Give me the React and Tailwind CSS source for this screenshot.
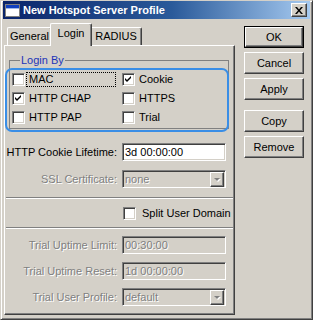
import React from 'react';

const raised =
  'border border-t-white border-l-white border-b-[#404040] border-r-[#404040] shadow-[inset_-1px_-1px_0_#808080,inset_1px_1px_0_#d4d0c8]';
const sunken =
  'border border-t-[#808080] border-l-[#808080] border-b-white border-r-white shadow-[inset_1px_1px_0_#404040,inset_-1px_-1px_0_#d4d0c8]';
const dimText = 'text-[#808080] [text-shadow:1px_1px_0_#ffffff]';

const Check = ({ checked }) => (
  <span className={`${sunken} w-[13px] h-[13px] shrink-0 bg-white flex items-center justify-center`}>
    {checked && (
      <svg width="7" height="7" viewBox="0 0 7 7">
        <path d="M0 2 L2 4 L6 0 L6 2 L2 6 L0 4 Z" fill="#000" />
      </svg>
    )}
  </span>
);

const Box = ({ label, checked, focus }) => (
  <div className="flex items-center h-[13px]">
    <Check checked={checked} />
    <span
      className={`ml-[2px] pl-[2px] h-[13px] leading-[12px] whitespace-nowrap ${focus ? 'w-[88px] outline outline-1 outline-dotted outline-[#000]' : ''}`}
    >
      {label}
    </span>
  </div>
);

const Arrow = ({ dim }) => (
  <span className={`${raised} w-[14px] h-[15px] bg-[#d4d0c8] flex items-center justify-center`}>
    <svg width="8" height="5" viewBox="0 0 8 5">
      {dim && <path d="M2 2 L8 2 L5 5 Z" fill="#fff" />}
      <path d="M1 1 L7 1 L4 4 Z" fill={dim ? '#808080' : '#000'} />
    </svg>
  </span>
);

const Field = ({ label, value, disabled, select, className = '' }) => (
  <div className={`flex items-center ${className}`}>
    <div className={`w-[112px] text-right whitespace-nowrap ${disabled ? dimText : ''}`}>{label}</div>
    <div
      className={`${sunken} ml-[5px] w-[104px] h-[18px] flex items-center justify-between pl-[2px] pr-[1px] ${
        disabled ? 'bg-[#d4d0c8]' : 'bg-white'
      }`}
    >
      <span className={disabled ? dimText : ''}>{value}</span>
      {select && <Arrow dim={disabled} />}
    </div>
  </div>
);

const Separator = ({ className = '' }) => (
  <div className={`h-[2px] border-t border-t-[#808080] border-b border-b-white ${className}`} />
);

const Button = ({ children, def, className = '' }) => (
  <div className={`${def ? 'border border-black' : ''} ${className}`}>
    <div
      className={`${raised} ${def ? 'h-[20px]' : 'h-[22px]'} flex items-center justify-center bg-[#d4d0c8]`}
    >
      {children}
    </div>
  </div>
);

const Tab = ({ children, active, className = '' }) => (
  <div
    className={`border border-b-0 border-t-white border-l-white border-r-[#404040] rounded-t-[2px] shadow-[inset_-1px_0_0_#808080] flex items-center justify-center bg-[#d4d0c8] ${
      active ? 'h-[23px] -mb-[1px] relative z-10 -mx-[2px] pb-[3px]' : 'h-[18px]'
    } ${className}`}
  >
    {children}
  </div>
);

export default function App() {
  return (
    <div className="w-[313px] h-[320px] bg-[#d4d0c8] text-[11px] text-black font-['Liberation_Sans',Arial,sans-serif] border border-t-[#d4d0c8] border-l-[#d4d0c8] border-r-[#404040] border-b-[#404040] shadow-[inset_1px_1px_0_#ffffff,inset_-1px_-1px_0_#808080] px-[2px] overflow-hidden">
      {/* title bar */}
      <div className="h-[18px] bg-[linear-gradient(to_right,#0a246a,#2a5a9a_55%,#a6caf0)] flex items-center pl-[2px] pr-[3px]">
        <svg width="15" height="13" viewBox="0 0 15 13" className="shrink-0">
          <rect x="0.5" y="0.5" width="14" height="12" fill="#fff" stroke="#808080" />
          <rect x="1" y="1" width="13" height="3" fill="#1040c0" />
          <rect x="1" y="4" width="13" height="1" fill="#a0b8e8" />
        </svg>
        <span className="ml-[3px] font-bold text-white text-[11px] leading-none">New Hotspot Server Profile</span>
        <div className={`${raised} ml-auto w-[16px] h-[14px] bg-[#d4d0c8] flex items-center justify-center`}>
          <svg width="8" height="7" viewBox="0 0 8 7">
            <path d="M0 0 L2 0 L4 2.5 L6 0 L8 0 L5 3.5 L8 7 L6 7 L4 4.5 L2 7 L0 7 L3 3.5 Z" fill="#000" />
          </svg>
        </div>
      </div>

      <div className="flex">
        {/* left: tabs + panel */}
        <div className="w-[231px] ml-[1px]">
          <div className="flex items-end h-[26px] pl-[3px]">
            <Tab className="w-[45px]">General</Tab>
            <Tab active className="w-[42px]">Login</Tab>
            <Tab className="w-[52px]">RADIUS</Tab>
          </div>
          <div className="relative h-[270px] border border-t-white border-l-white border-r-[#404040] border-b-[#404040] shadow-[inset_-1px_-1px_0_#808080]">
            <fieldset className="mt-[8px] ml-[4px] w-[220px] border border-[#808080] pt-[6px] pb-[4px] pl-[2px]">
              <legend className="ml-[8px] px-[1px] text-[#1c34b8] leading-[13px]">Login By</legend>
              <div className="grid grid-cols-[110px_1fr] gap-y-[6px]">
                <Box label="MAC" focus />
                <Box label="Cookie" checked />
                <Box label="HTTP CHAP" checked />
                <Box label="HTTPS" />
                <Box label="HTTP PAP" />
                <Box label="Trial" />
              </div>
            </fieldset>
            <div className="absolute left-[0px] top-[22px] w-[224px] h-[64px] border-2 border-[#3a8ee6] rounded-[7px] pointer-events-none" />

            <Field className="mt-[14px]" label="HTTP Cookie Lifetime:" value="3d 00:00:00" />
            <Field className="mt-[9px]" label="SSL Certificate:" value="none" disabled select />
            <Separator className="mt-[9px] mx-[1px]" />
            <div className="flex items-center mt-[8px] ml-[118px] h-[13px]">
              <Check />
              <span className="ml-[6px] whitespace-nowrap">Split User Domain</span>
            </div>
            <Separator className="mt-[7px] mx-[1px]" />
            <Field className="mt-[7px]" label="Trial Uptime Limit:" value="00:30:00" disabled />
            <Field className="mt-[8px]" label="Trial Uptime Reset:" value="1d 00:00:00" disabled />
            <Field className="mt-[8px]" label="Trial User Profile:" value="default" disabled select />
          </div>
        </div>

        {/* right: buttons */}
        <div className="ml-[9px] mt-[7px] w-[60px] flex flex-col">
          <Button def>OK</Button>
          <Button className="mt-[4px]">Cancel</Button>
          <Button className="mt-[4px]">Apply</Button>
          <Button className="mt-[10px]">Copy</Button>
          <Button className="mt-[4px]">Remove</Button>
        </div>
      </div>
    </div>
  );
}
